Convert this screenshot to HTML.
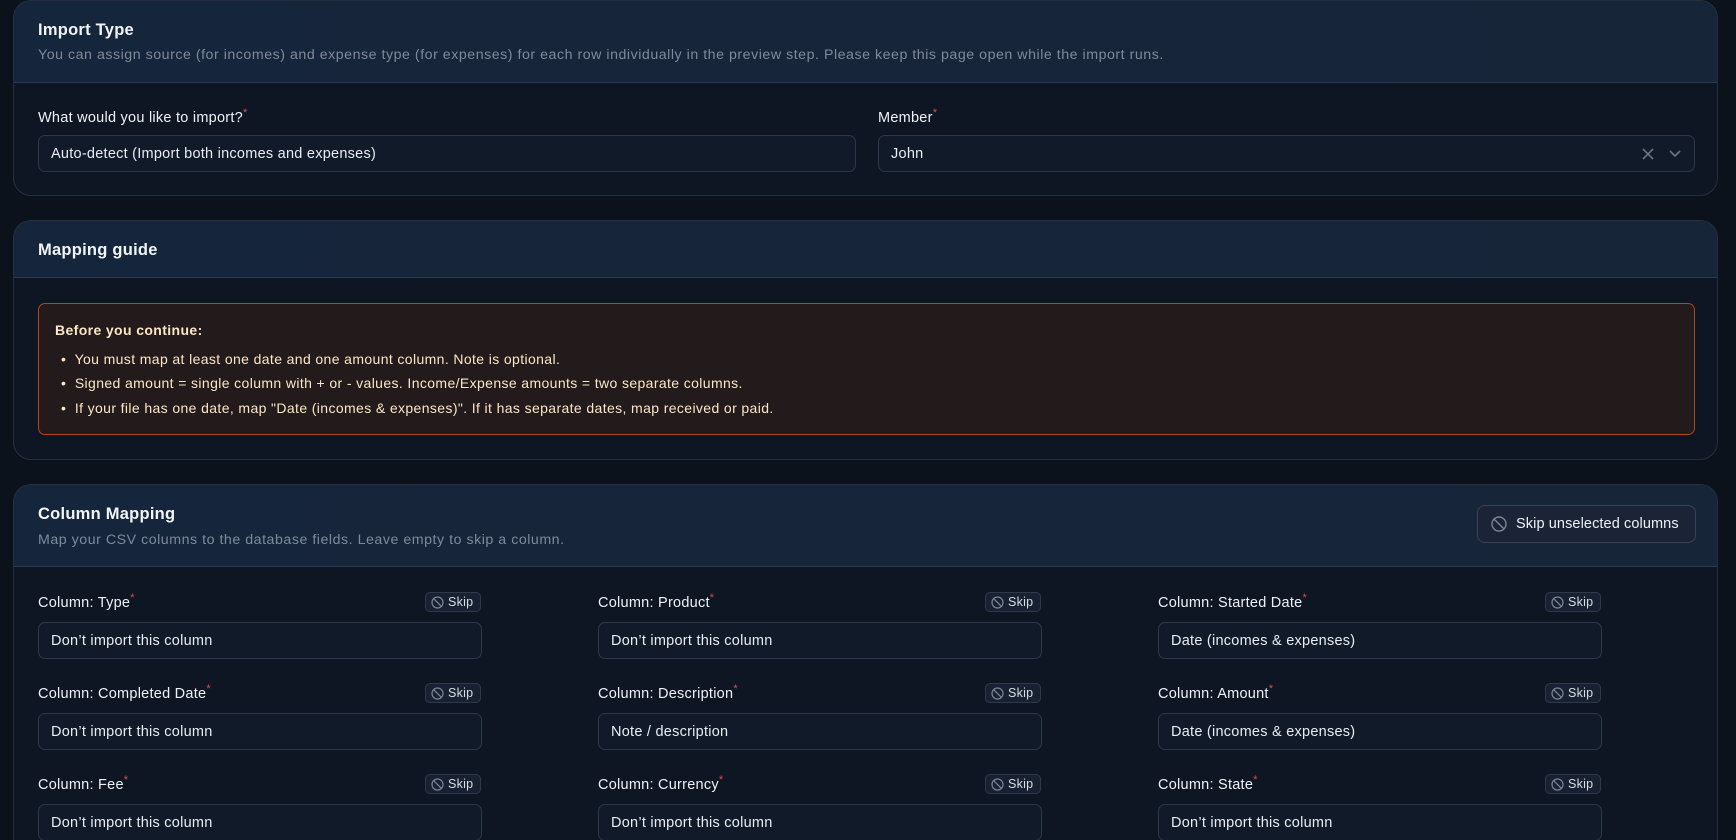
<!DOCTYPE html>
<html style="width:1736px;height:840px;overflow:hidden"><head><meta charset="utf-8"><style>
*{box-sizing:border-box;margin:0;padding:0}
body{width:1736px;height:840px;overflow:hidden;background:#0c121c;font-family:"Liberation Sans",sans-serif;color:#e8edf3;position:relative;letter-spacing:0.25px}
.card{position:absolute;left:13px;width:1705px;border:1px solid #243042;border-radius:18px;background:#0e1624;overflow:hidden}
.hd{position:absolute;left:0;right:0;top:0;background:linear-gradient(90deg,#15253b,#172539);border-bottom:1px solid #2a3a50}
.t{position:absolute;left:24px;font-size:16.5px;font-weight:bold;color:#f1f5f9}
.s{position:absolute;left:24px;font-size:14.2px;color:#7f8a99;letter-spacing:0.53px}
.lbl{position:absolute;font-size:14.5px;color:#eef2f6}
.lbl i{color:#e5484d;font-style:normal;font-size:11px;vertical-align:top;position:relative;top:-3px}
.inp{position:absolute;height:37px;border:1px solid #2c3748;border-radius:7px;background:#111a29;font-size:14.5px;padding-left:12px;line-height:36px;color:#e8edf3}
.skip{position:absolute;width:56px;height:20px;border:1px solid #2e3a4b;border-radius:5px;background:#182131;font-size:12.5px;line-height:18px;color:#d6dce4;padding-left:22px}
.skip svg{position:absolute;left:5px;top:3px}
.warn{position:absolute;left:24px;top:82px;width:1657px;height:132px;border:1px solid #b4441a;border-radius:7px;background:#221a1b;color:#fbe6c6;font-size:14px;letter-spacing:0.38px}
</style></head><body>

<div class="card" style="top:0;height:196px">
  <div class="hd" style="height:82px"></div>
  <div class="t" style="top:20px">Import Type</div>
  <div class="s" style="top:46px">You can assign source (for incomes) and expense type (for expenses) for each row individually in the preview step. Please keep this page open while the import runs.</div>
  <div class="lbl" style="left:24px;top:109px">What would you like to import?<i>*</i></div>
  <div class="inp" style="left:24px;top:134px;width:818px">Auto-detect (Import both incomes and expenses)</div>
  <div class="lbl" style="left:864px;top:109px">Member<i>*</i></div>
  <div class="inp" style="left:864px;top:134px;width:817px">John
    <svg style="position:absolute;right:40px;top:12px" width="12" height="12" viewBox="0 0 12 12"><path d="M1 1L11 11M11 1L1 11" stroke="#6b7584" stroke-width="1.6"/></svg>
    <svg style="position:absolute;right:13px;top:14px" width="12" height="8" viewBox="0 0 12 8"><path d="M1 1L6 6L11 1" stroke="#6b7584" stroke-width="1.6" fill="none"/></svg>
  </div>
</div>

<div class="card" style="top:220px;height:240px">
  <div class="hd" style="height:57px"></div>
  <div class="t" style="top:20px">Mapping guide</div>
  <div class="warn">
    <div style="position:absolute;left:16px;top:18px;font-weight:bold">Before you continue:</div>
    <div style="position:absolute;left:22px;top:47px">•&nbsp; You must map at least one date and one amount column. Note is optional.</div>
    <div style="position:absolute;left:22px;top:71px">•&nbsp; Signed amount = single column with + or - values. Income/Expense amounts = two separate columns.</div>
    <div style="position:absolute;left:22px;top:96px">•&nbsp; If your file has one date, map "Date (incomes &amp; expenses)". If it has separate dates, map received or paid.</div>
  </div>
</div>

<div class="card" style="top:484px;height:380px">
  <div class="hd" style="height:82px"></div>
  <div class="t" style="top:20px">Column Mapping</div>
  <div class="s" style="top:47px">Map your CSV columns to the database fields. Leave empty to skip a column.</div>
  <div style="position:absolute;left:1463px;top:20px;width:219px;height:38px;border:1px solid #34415a;border-radius:8px;background:#1a2436;font-size:14.5px;line-height:36px;padding-left:38px;color:#eef2f6;letter-spacing:0.1px">
    <svg style="position:absolute;left:13px;top:10px" width="16" height="16" viewBox="0 0 16 16"><circle cx="8" cy="8" r="7" stroke="#7a8493" stroke-width="1.4" fill="none"/><path d="M3.2 3.2L12.8 12.8" stroke="#7a8493" stroke-width="1.4"/></svg>Skip unselected columns</div>
</div>

<div id="cols"></div>
<script>
var data=[["Type","Don’t import this column"],["Product","Don’t import this column"],["Started Date","Date (incomes &amp; expenses)"],
["Completed Date","Don’t import this column"],["Description","Note / description"],["Amount","Date (incomes &amp; expenses)"],
["Fee","Don’t import this column"],["Currency","Don’t import this column"],["State","Don’t import this column"]];
var xs=[38,598,1158],ys=[595,686,777],h="";
data.forEach(function(d,i){var x=xs[i%3],y=ys[Math.floor(i/3)];
h+='<div class="lbl" style="left:'+x+'px;top:'+y+'px">Column: '+d[0]+'<i>*</i></div>';
h+='<div class="skip" style="left:'+(x+387)+'px;top:'+(y-3)+'px"><svg width="13" height="13" viewBox="0 0 16 16"><circle cx="8" cy="8" r="6.8" stroke="#7a8493" stroke-width="1.5" fill="none"/><path d="M3.3 3.3L12.7 12.7" stroke="#7a8493" stroke-width="1.5"/></svg>Skip</div>';
h+='<div class="inp" style="left:'+x+'px;top:'+(y+27)+'px;width:444px">'+d[1]+'</div>';});
document.getElementById('cols').innerHTML=h;
</script>
</body></html>
